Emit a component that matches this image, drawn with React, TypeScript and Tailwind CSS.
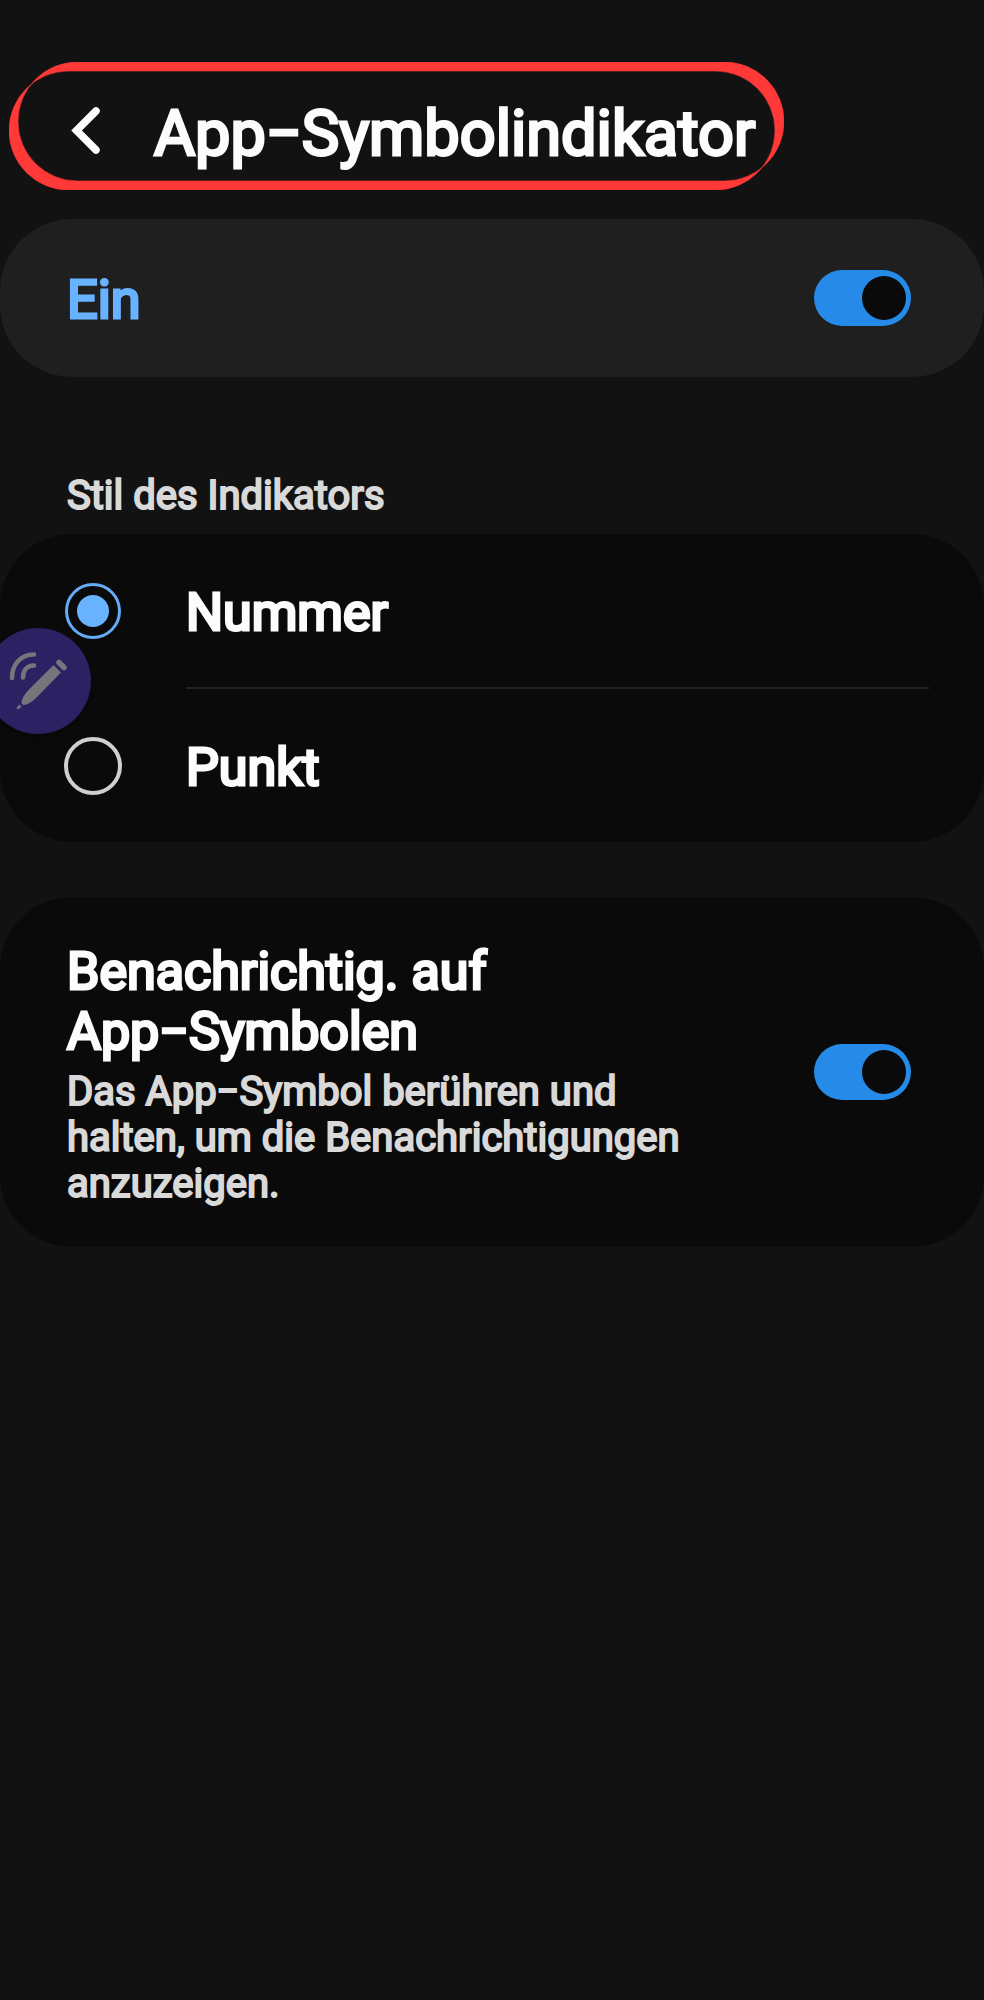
import { useState } from 'react'

interface ToggleProps {
  id: string
  checked: boolean
  onChange: (value: boolean) => void
}

function Toggle({ id, checked, onChange }: ToggleProps) {
  return (
    <input
      id={id}
      type="checkbox"
      role="switch"
      checked={checked}
      onChange={(e) => onChange(e.target.checked)}
      className="flex h-[56px] w-[97px] shrink-0 cursor-pointer appearance-none items-center rounded-full bg-[#555555] px-[5px] before:block before:size-[44px] before:rounded-full before:bg-[#0a0a0a] checked:justify-end checked:bg-[#268ae8]"
    />
  )
}

interface StyleOptionProps {
  value: string
  label: string
  checked: boolean
  onSelect: (value: string) => void
}

function StyleOption({ value, label, checked, onSelect }: StyleOptionProps) {
  return (
    <label className="flex h-[153px] cursor-pointer items-center gap-[64px] pl-[64px]">
      <input
        type="radio"
        name="indicator-style"
        value={value}
        checked={checked}
        onChange={() => onSelect(value)}
        className="flex size-[58px] shrink-0 appearance-none items-center justify-center rounded-full border-4 border-[#cfcfcf] checked:mx-px checked:size-[56px] checked:border-3 checked:border-[#64acf5] checked:before:block checked:before:size-[32px] checked:before:rounded-full checked:before:bg-[#68b2ff]"
      />
      <span className="pt-[4px] text-[52px] leading-[60px] text-[#fcfcfc] [-webkit-text-stroke:3px]">
        {label}
      </span>
    </label>
  )
}

function PenIcon() {
  return (
    <svg viewBox="0 0 106 106" className="size-full" fill="none" aria-hidden="true">
      <g stroke="#77757b" strokeLinecap="round">
        <path d="M27 50C27 36 36 26.500 49 26.500" strokeWidth="4.500" />
        <path d="M38 49.500C38 42 42 37.500 49 37.500" strokeWidth="4.500" />
        <path d="M74 34.500L79 39.500" strokeWidth="5.500" />
      </g>
      <path
        d="M68.500 37L76 44.500L52 69C47 74 43 76.500 38.500 77.200L36.500 75C36.500 71 39 67 44 61.500Z"
        fill="#77757b"
      />
      <path d="M34.500 76.500L36.800 78.800L33 81.200Q31 81.500 31.800 79.500Z" fill="#77757b" />
    </svg>
  )
}

export default function App() {
  const [enabled, setEnabled] = useState(true)
  const [style, setStyle] = useState('number')
  const [preview, setPreview] = useState(true)

  return (
    <main className="min-h-screen overflow-hidden bg-[#121212] pt-[62px] font-['Roboto',sans-serif]">
      <header className="relative mx-[9px] flex h-[128px] items-center gap-[49px] pl-[56px]">
        {/* Marker ring round the title */}
        <svg
          viewBox="0 0 775 128"
          className="pointer-events-none absolute top-0 left-0 h-[128px] w-[775px]"
          aria-hidden="true"
        >
          <path
            fillRule="evenodd"
            fill="#ff3838"
            stroke="#ff3838"
            strokeWidth="0.600"
            d="M68.500 0H715.500A59.500 59.500 0 0 1 715.500 119H68.500A59.500 59.500 0 0 1 68.500 0ZM59.500 9H706.500A59.500 59.500 0 0 1 706.500 128H59.500A59.500 59.500 0 0 1 59.500 9Z"
          />
        </svg>
        <button type="button" aria-label="Zurück" className="flex h-[60px] w-[40px] items-end">
          <svg viewBox="0 0 40 56" className="h-[56px] w-[40px]" fill="none" aria-hidden="true">
            <path
              d="M31 11L11.500 30.500L31 50"
              stroke="#fcfcfc"
              strokeWidth="7.500"
              strokeLinecap="round"
              strokeLinejoin="miter"
            />
          </svg>
        </button>
        <h1 className="pt-[16px] text-[63px] leading-[72px] font-normal whitespace-nowrap text-[#fcfcfc] [-webkit-text-stroke:3px]">
          App−Symbolindikator
        </h1>
      </header>

      <section className="mt-[29px] flex h-[158px] items-center justify-between rounded-[72px] bg-[#1f1f1f] pr-[73px] pl-[67px]">
        <label
          htmlFor="enabled"
          className="pt-[4px] text-[54px] leading-[64px] text-[#68b2ff] [-webkit-text-stroke:3px]"
        >
          Ein
        </label>
        <Toggle id="enabled" checked={enabled} onChange={setEnabled} />
      </section>

      <h2 className="mt-[96px] pl-[67px] text-[40px] leading-[46px] font-normal text-[#d9d9d9] [-webkit-text-stroke:2px]">
        Stil des Indikators
      </h2>

      <section className="relative mt-[15px] rounded-[72px] bg-[#0a0a0a]">
        <StyleOption value="number" label="Nummer" checked={style === 'number'} onSelect={setStyle} />
        <div className="mr-[55px] ml-[186px] h-[2px] bg-[#222222]" />
        <StyleOption value="dot" label="Punkt" checked={style === 'dot'} onSelect={setStyle} />

        {/* Floating pen shortcut, partly off the left edge */}
        <button
          type="button"
          aria-label="S Pen"
          className="absolute top-[94px] left-[-15px] size-[106px] rounded-full bg-[#2c2162] shadow-md"
        >
          <PenIcon />
        </button>
      </section>

      <section className="mt-[55px] flex items-center justify-between rounded-[72px] bg-[#0a0a0a] py-[40px] pr-[73px] pl-[67px]">
        <label htmlFor="preview" className="pt-[5px]">
          <span className="block text-[52px] leading-[60px] text-[#fcfcfc] [-webkit-text-stroke:3px]">
            Benachrichtig. auf
            <br />
            App−Symbolen
          </span>
          <span className="mt-[7px] block text-[40px] leading-[46px] text-[#d9d9d9] [-webkit-text-stroke:2px]">
            Das App−Symbol berühren und
            <br />
            halten, um die Benachrichtigungen
            <br />
            anzuzeigen.
          </span>
        </label>
        <Toggle id="preview" checked={preview} onChange={setPreview} />
      </section>
    </main>
  )
}
